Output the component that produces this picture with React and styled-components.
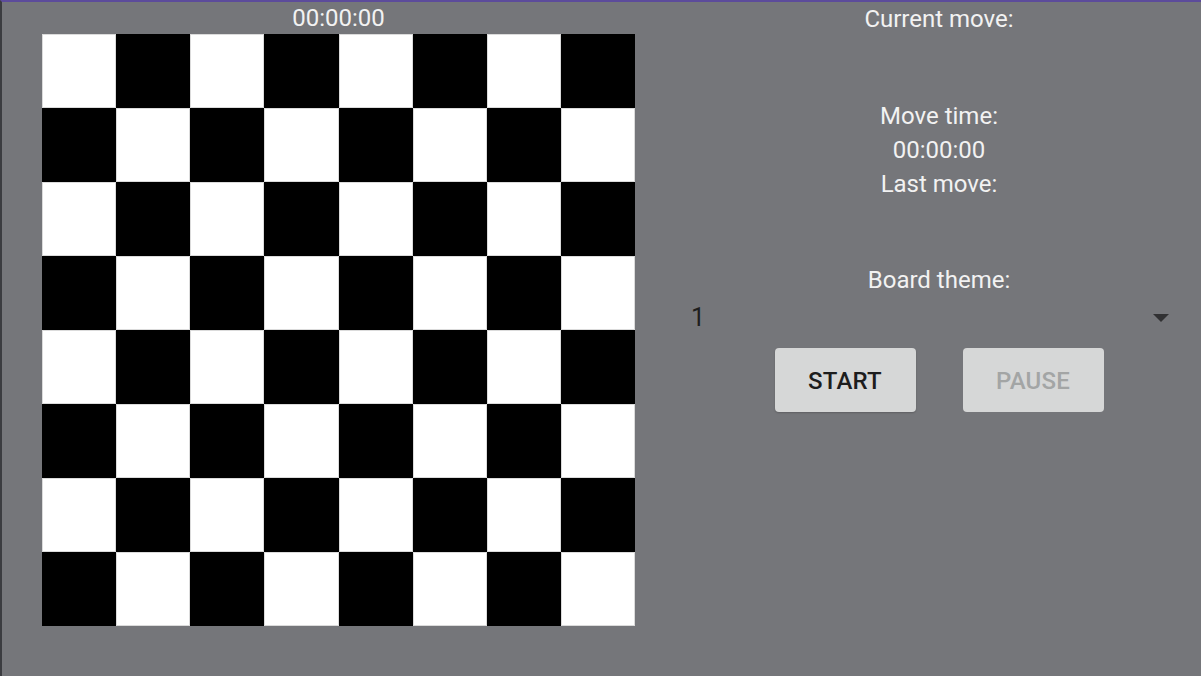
import React from "react";
import styled, { createGlobalStyle } from "styled-components";

const GlobalStyle = createGlobalStyle`
  html, body {
    margin: 0;
    padding: 0;
    background: #75767a;
  }
  body {
    font-family: Roboto, "Noto Sans", sans-serif;
  }
`;

const Page = styled.div`
  box-sizing: border-box;
  height: 676px;
  display: flex;
  background: #75767a;
  border-top: 2px solid #5c4b9b;
  border-left: 2px solid #3b3c40;
  color: #f2f2f2;
`;

const BoardColumn = styled.div`
  display: flex;
  flex-direction: column;
  padding-left: 40px;
  width: 593px;
`;

const Timer = styled.div`
  font-size: 24px;
  line-height: 32px;
  text-align: center;
`;

const Board = styled.div`
  display: grid;
  grid-template-columns: repeat(8, 1fr);
  grid-template-rows: repeat(8, 1fr);
  width: 593px;
  height: 592px;
`;

const Square = styled.div`
  background: ${(p) => (p.$dark ? "#000" : "#fff")};
  box-shadow: ${(p) => (p.$dark ? "none" : "inset 0 0 0 1px rgba(0,0,0,0.14)")};
`;

const SidePanel = styled.div`
  flex: 1;
  margin-left: 42px;
  display: flex;
  flex-direction: column;
  align-items: center;
`;

const Line = styled.div`
  font-size: 24px;
  line-height: 34px;
  text-align: center;
  margin-top: ${(p) => p.$gap || 0}px;
`;

const Select = styled.div`
  box-sizing: border-box;
  align-self: stretch;
  height: 34px;
  margin: 4px 22px 0 2px;
  padding: 0 10px 0 12px;
  display: flex;
  align-items: center;
  justify-content: space-between;
  font-size: 25px;
  line-height: 34px;
  color: #1e1e1e;
`;

const Arrow = styled.span`
  width: 0;
  height: 0;
  border-left: 8px solid transparent;
  border-right: 8px solid transparent;
  border-top: 8px solid rgba(0, 0, 0, 0.58);
`;

const ButtonRow = styled.div`
  display: flex;
  gap: 47px;
  margin-top: 13px;
`;

const Button = styled.button`
  width: 141px;
  height: 64px;
  border: none;
  border-radius: 4px;
  background: #d6d7d7;
  font-family: Roboto, sans-serif;
  font-weight: 500;
  font-size: 24px;
  letter-spacing: 0.2px;
  text-transform: uppercase;
  color: ${(p) => (p.disabled ? "#a3a5a5" : "#1d1d1d")};
  box-shadow: ${(p) => (p.disabled ? "none" : "0 1px 2px rgba(0,0,0,0.2)")};
  padding: 2px 0 0;
`;

export default function App() {
  const squares = [];
  for (let r = 0; r < 8; r++) {
    for (let c = 0; c < 8; c++) {
      squares.push(<Square key={`${r}-${c}`} $dark={(r + c) % 2 === 1} />);
    }
  }
  return (
    <>
      <GlobalStyle />
      <Page>
        <BoardColumn>
          <Timer>00:00:00</Timer>
          <Board>{squares}</Board>
        </BoardColumn>
        <SidePanel>
          <Line>Current move:</Line>
          <Line $gap={63}>Move time:</Line>
          <Line>00:00:00</Line>
          <Line>Last move:</Line>
          <Line $gap={62}>Board theme:</Line>
          <Select>
            <span>1</span>
            <Arrow />
          </Select>
          <ButtonRow>
            <Button>Start</Button>
            <Button disabled>Pause</Button>
          </ButtonRow>
        </SidePanel>
      </Page>
    </>
  );
}
